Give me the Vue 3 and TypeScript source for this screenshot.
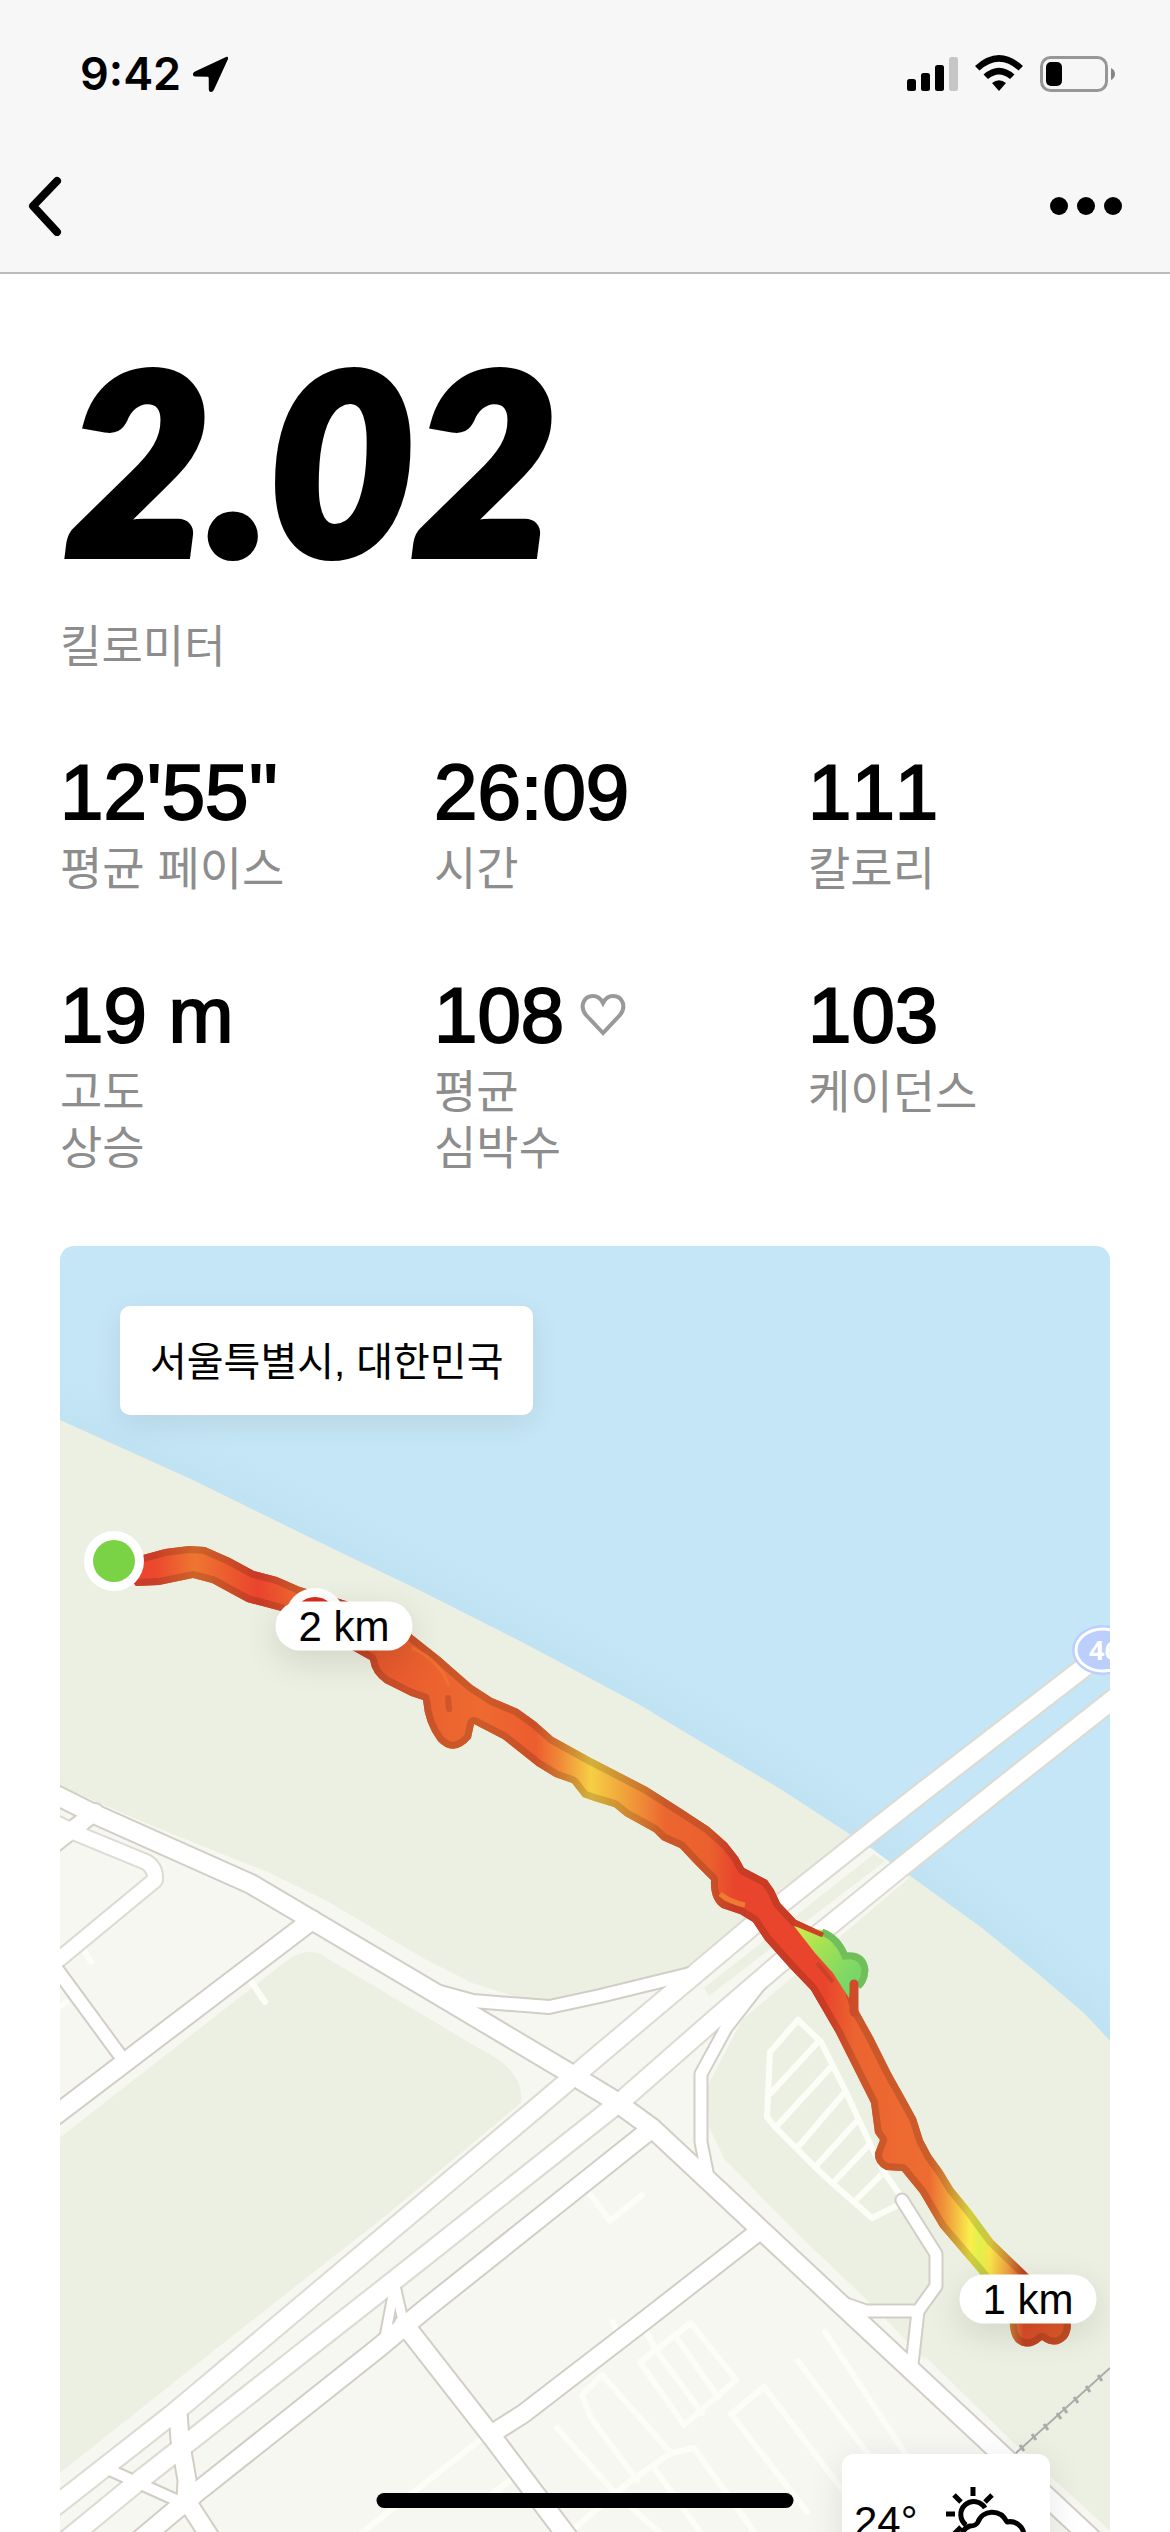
<script setup lang="ts">
interface Metric {
  value: string
  label: string[]
  heart?: boolean
}

interface Pin {
  text: string
  x: number
  y: number
}

const metrics: Metric[] = [
  { value: "12'55''", label: ['평균 페이스'] },
  { value: '26:09', label: ['시간'] },
  { value: '111', label: ['칼로리'] },
  { value: '19 m', label: ['고도', '상승'] },
  { value: '108', label: ['평균', '심박수'], heart: true },
  { value: '103', label: ['케이던스'] },
]

// The map drawing spans 1050 x 1286 units, with its origin at (60, 1246).
const map = { x: 60, y: 1246, width: 1050, height: 1286 }

const pins: Pin[] = [
  { text: '2 km', x: 344, y: 1626 },
  { text: '1 km', x: 1028, y: 2299 },
]

const pinStyle = (pin: Pin) => ({
  left: `${((pin.x - map.x) / map.width) * 100}%`,
  top: `${((pin.y - map.y) / map.height) * 100}%`,
})

const shore =
  'M40 1411 L193 1480 L315 1540 L423 1592 L522 1642 L640 1705 L698 1740 L782 1790 L851 1835 L909 1875 L982 1928 L1036 1972 L1084 2013 L1130 2062'

const roads: { d: string; w: number; minor?: boolean }[] = [
  { d: 'M1130 1632 L925 1790 L860 1841 L782 1903 L752 1926 L600 2054 L534 2110 L187 2402 L170 2416 L40 2518', w: 18 },
  { d: 'M1130 1686 L998 1790 L899 1869 L824 1930 L780 1963 L716 2018 L626 2097 L396 2279 L190 2441 L135 2484 L40 2562', w: 18 },
  { d: 'M40 1787 L92 1813 L251 1884 L430 1990 L566 2071 L612 2099 L652 2128 L1120 2565', w: 18, minor: true },
  { d: 'M40 1855 L95 1812', w: 16, minor: true },
  { d: 'M50 1820 L78 1834 L146 1862 Q156 1868 155 1880 L40 1975', w: 14 },
  { d: 'M50 1960 L119 2054', w: 12, minor: true },
  { d: 'M312 1920 L40 2127', w: 18, minor: true },
  { d: 'M646 2133 L424 2310 L377 2349 L197 2492 L110 2565', w: 18, minor: true },
  { d: 'M394 2290 L384 2342', w: 9, minor: true },
  { d: 'M396 2290 L404 2325', w: 9, minor: true },
  { d: 'M404 2324 L493 2438 L570 2540', w: 18, minor: true },
  { d: 'M493 2433 L523 2414 L640 2324 L758 2232', w: 17, minor: true },
  { d: 'M178 2412 L180 2440 L187 2480 L186 2500 L212 2540', w: 17, minor: true },
  { d: 'M103 2467 L185 2504', w: 10, minor: true },
  { d: 'M440 1992 L473 2001 L549 2007 L600 1996 L690 1974', w: 12, minor: true },
  { d: 'M765 1978 L726 2028 L701 2074 L701 2142 L707 2172', w: 11, minor: true },
  { d: 'M902 2200 L936 2254 L936 2286 L918 2311 L866 2311 L846 2304', w: 11, minor: true },
  { d: 'M918 2311 L912 2365', w: 11, minor: true },
]

const paths: string[] = [
  'M798 2020 L770 2052 L767 2117 L776 2128 L815 2167 L831 2182 L872 2218 L898 2205',
  'M798 2020 L821 2042 L845 2090 L873 2150 L884 2172 L902 2198',
  'M818 2042 L771 2093 M830 2068 L776 2127 M845 2092 L798 2147 M856 2122 L815 2167 M869 2145 L833 2183 M883 2173 L856 2200',
  'M587 2190 L610 2221 L642 2195',
  'M691 2323 L640 2362 L684 2425 L736 2380 Z',
  'M676 2337 L718 2397 M613 2322 L616 2330 M647 2333 L656 2350 L702 2413',
  'M825 2332 L916 2470 M798 2361 L880 2470',
  'M807 2512 L731 2414 L764 2387 L850 2500',
  'M637 2480 L591 2418 L582 2395 L602 2375 L671 2453',
  'M576 2527 L629 2482 L671 2453 L694 2448 L760 2540 M654 2468 L706 2540',
  'M557 2428 L614 2492 L668 2540',
  'M480 2440 L350 2542 M511 2480 L491 2495',
  'M84 1950 L91 1962 M250 1980 L265 2002 M50 2014 L66 2002',
]

const ties: [number, number][] = [
  [1100, 2378], [1088, 2389], [1076, 2400], [1065, 2410],
  [1059, 2416], [1046, 2427], [1034, 2437], [1022, 2448],
]

const route =
  'M116 1560 L143 1555 L165 1549 L189 1546 L205 1547 L230 1558 L254 1571 L277 1577 L300 1587 L346 1601 L411 1634 L440 1657 L472 1685 L492 1698 L518 1709 L536 1722 L553 1737 L591 1758 L620 1773 L647 1787 L680 1808 L709 1827 L727 1843 L738 1857 L744 1868 L767 1880 L774 1890 L780 1903 L796 1920 L822 1932 L840 1960 L849 1982 L858 2010 L873 2037 L891 2073 L905 2098 L916 2118 L923 2140 L931 2155 L942 2170 L953 2188 L971 2210 L993 2240 L1027 2273 L1066 2310 Q1075 2326 1067 2338 Q1056 2350 1042 2340 Q1028 2352 1016 2342 Q1008 2334 1010 2310 L980 2274 L940 2227 L920 2193 L902 2171 L886 2170 Q874 2164 875 2153 L880 2140 L875 2133 L871 2103 L856 2073 L836 2033 L811 1990 L789 1967 L765 1940 L753 1922 L740 1914 L722 1908 Q710 1900 711 1880 L695 1864 L680 1848 L662 1840 L654 1832 L625 1816 L614 1807 L594 1801 L583 1797 L572 1783 L555 1777 L537 1766 L503 1739 L474 1724 L471 1738 Q454 1758 438 1741 Q425 1724 423 1700 L411 1696 L385 1683 Q372 1674 370 1660 L354 1651 L300 1620 L281 1611 L247 1602 L212 1583 L193 1578 L159 1585 L136 1586 Z'

const routeStops: [number, string][] = [
  [114, '#ec442e'], [155, '#ec482e'], [195, '#ee7631'], [258, '#ea432d'],
  [300, '#ee6a30'], [345, '#de452b'], [380, '#e8592e'], [480, '#ee6a30'],
  [535, '#ec5c2f'], [560, '#f08a38'], [591, '#f5cf45'], [635, '#f09438'],
  [665, '#ec6630'], [710, '#ea602e'], [735, '#e9452c'], [825, '#e9452c'],
  [855, '#ec6430'], [930, '#ed6d31'], [946, '#f09a3b'], [970, '#faee4b'],
  [980, '#e2f04c'], [990, '#f8e44b'], [1008, '#f0a040'], [1024, '#dd4d29'],
  [1080, '#e2602b'],
]
</script>

<template>
  <main class="screen">
    <header class="top">
      <div class="status">
        <div class="clock">
          <span>9:42</span>
          <svg class="arrow" viewBox="0 0 36 36" aria-hidden="true">
            <path d="M35 3Q35.500 0 32.500 1.200L2 15.500Q-.5 17 0 19Q.5 20.500 2.500 20.500L14.500 20.700Q15.700 20.700 15.700 22L15.800 33.500Q16 36 18 36Q19.800 36 20.800 34Z" />
          </svg>
        </div>
        <svg class="indicators" viewBox="907 54 209 40" aria-label="신호, Wi-Fi, 배터리">
          <rect x="907" y="79" width="9" height="12" rx="2.500" />
          <rect x="921" y="73" width="9" height="18" rx="2.500" />
          <rect x="935" y="65" width="9" height="26" rx="2.500" />
          <rect x="949" y="57" width="9" height="34" rx="2.500" fill="#c6c6c6" />
          <path d="M975 66Q999 44 1023 66L1018.500 70.500Q999 53 979.500 70.500Z" />
          <path d="M983.500 74.500Q999 61 1014.500 74.500L1010 79Q999 70 988 79Z" />
          <path d="M992 83Q999 77.500 1006 83L999 91Z" />
          <rect x="1041.500" y="57.500" width="65" height="33" rx="9" fill="none" stroke="#979797" stroke-width="3" />
          <rect x="1046" y="62" width="16" height="24" rx="5" />
          <path d="M1111 68Q1115 70 1115 74T1111 80Z" fill="#858585" />
        </svg>
      </div>
      <nav class="nav">
        <button class="icon-btn" type="button" aria-label="뒤로">
          <svg width="36" height="60" viewBox="0 0 36 60"><path d="M30 5L6 30L30 56" fill="none" stroke="#000" stroke-width="8" stroke-linecap="round" stroke-linejoin="round" /></svg>
        </button>
        <button class="icon-btn" type="button" aria-label="더 보기">
          <svg width="74" height="20" viewBox="0 0 74 20"><circle cx="10" cy="10" r="9" /><circle cx="37" cy="10" r="9" /><circle cx="64" cy="10" r="9" /></svg>
        </button>
      </nav>
    </header>

    <section class="content">
      <h1 class="distance">2.02</h1>
      <p class="label unit">킬로미터</p>

      <dl class="metrics">
        <div v-for="m in metrics" :key="m.value" class="metric">
          <dd class="value">
            {{ m.value }}
            <svg v-if="m.heart" class="heart" viewBox="0 0 46 44" aria-hidden="true">
              <path d="M23 40L6 22C-1 13 4 3 13 3C18 3 21 6 23 10C25 6 28 3 33 3C42 3 47 13 40 22Z" />
            </svg>
          </dd>
          <dt class="label"><span v-for="line in m.label" :key="line">{{ line }}</span></dt>
        </div>
      </dl>

      <div class="map">
        <svg class="map-art" viewBox="60 1246 1050 1286" aria-hidden="true">
          <defs>
            <linearGradient id="pace" gradientUnits="userSpaceOnUse" x1="114" y1="0" x2="1080" y2="0">
              <stop v-for="[x, c] in routeStops" :key="x" :offset="(x - 114) / 966" :stop-color="c" />
            </linearGradient>
            <linearGradient id="fast" gradientUnits="userSpaceOnUse" x1="800" y1="1930" x2="855" y2="1972">
              <stop offset="0" stop-color="#c9e84f" />
              <stop offset=".4" stop-color="#a4e153" />
              <stop offset="1" stop-color="#79d768" />
            </linearGradient>
            <clipPath id="route-clip"><path :d="route" /></clipPath>
            <filter id="soft" x="-10%" y="-10%" width="120%" height="120%"><feGaussianBlur stdDeviation="20" /></filter>
          </defs>

          <rect x="60" y="1246" width="1050" height="1286" fill="#c5e6f6" />
          <path :d="shore" fill="none" stroke="#b4dbeb" stroke-width="40" opacity=".4" filter="url(#soft)" />
          <path :d="`${shore} V2560 H40 Z`" fill="#ecf0e2" />
          <path
            d="M40 1777 L155 1827 L270 1873 L327 1901 L423 1958 L472 1983 L514 1996 L549 2004 L682 1971 L849 1836 L874 1850 L909 1878 L742 2020 L708 2085 L709 2127 L725 2160 L804 2240 L869 2302 L1014 2443 L1120 2540 V2560 H40 Z"
            fill="#f6f7f1"
          />
          <path d="M704 1988 L874 1854 L885 1861 L709 1996 Z" fill="#ecf0e2" />
          <path
            d="M40 2153 L285 1962 Q308 1945 325 1957 L499 2060 Q524 2078 521 2103 L384 2217 L231 2337 L40 2489 Z"
            fill="#ecf0e2"
          />
          <path d="M850 2250 L869 2302 L925 2360 L918 2311 Z" fill="#ecf0e2" />

          <g class="paths"><path v-for="d in paths" :key="d" :d="d" /></g>
          <g class="road">
            <path v-for="r in roads" :key="r.d" :d="r.d" :stroke-width="r.w + 4" :stroke="r.minor ? '#d2cec6' : '#dcdad1'" />
            <path v-for="r in roads" :key="r.d" :d="r.d" :stroke-width="r.w" stroke="#fff" />
          </g>

          <path d="M1110 2368 L1016 2453" stroke="#ababab" stroke-width="2" />
          <path v-for="[x, y] in ties" :key="x" :d="`M${x - 2} ${y - 3} l4 6`" stroke="#ababab" stroke-width="3" />

          <ellipse cx="1103" cy="1650" rx="31" ry="25" fill="#bccffc" />
          <ellipse cx="1103" cy="1650" rx="27" ry="21" fill="none" stroke="#fff" stroke-width="3" />
          <text x="1089" y="1660" class="shield">46</text>

          <path :d="route" fill="url(#pace)" />
          <g clip-path="url(#route-clip)" fill="none" stroke-linejoin="round">
            <path :d="route" stroke="url(#pace)" stroke-width="14" />
            <path :d="route" stroke="#000" stroke-width="14" opacity=".14" />
          </g>
          <path d="M794 1926 L822 1930 L836 1937 L847 1954 Q866 1952 868 1970 Q868 1984 858 1986 L851 1986 L849 1998 L833 1973 L815 1953 Z" fill="url(#fast)" />
          <path d="M822 1932 Q838 1938 845 1956 Q863 1954 865 1970 Q864 1982 858 1986" fill="none" stroke="#70bf5a" stroke-width="7" />
          <path d="M794 1923 L823 1935" stroke="#cc4026" stroke-width="5" />
          <path d="M854 1984 L854 2012" stroke="#cc4d27" stroke-width="9" stroke-linecap="round" />
          <path d="M817 1963 L833 1982" stroke="#cb4327" stroke-width="4" />
          <path d="M720 1894 Q730 1902 745 1905" fill="none" stroke="#ee7b33" stroke-width="5" />
          <path d="M412 1648 Q440 1660 449 1686" fill="none" stroke="#f07a34" stroke-width="3" opacity=".6" />
          <path d="M448 1698 L449 1709" stroke="#cf5629" stroke-width="6" stroke-linecap="round" />

          <circle cx="114" cy="1561" r="30" fill="#fff" />
          <circle cx="114" cy="1561" r="21" fill="#7ad345" />
          <circle cx="315" cy="1618" r="30" fill="#fff" />
          <circle cx="315" cy="1618" r="21" fill="#d92b20" />
        </svg>

        <p class="place">서울특별시, 대한민국</p>
        <span v-for="pin in pins" :key="pin.text" class="pin" :style="pinStyle(pin)">{{ pin.text }}</span>

        <div class="weather">
          <span>24°</span>
          <svg width="88" height="76" viewBox="0 0 88 76" fill="none" stroke="#000" stroke-width="5" aria-hidden="true">
            <path d="M29 3V12M2 30H11M10 11L17 18M48 11L41 18M10 50L17 43" />
            <path d="M22 41A13 13 0 1 1 41 24" />
            <path d="M24 64A12 12 0 0 1 26 42C31 42 33 40 34 38C38 26 56 24 63 38C72 36 79 43 80 50C82 58 76 64 69 64Z" stroke-linejoin="round" />
          </svg>
        </div>
      </div>
    </section>

    <div class="home-bar"></div>
  </main>
</template>

<style>
body {
  margin: 0;
  background: #fff;
}
</style>

<style scoped>
.screen {
  color: #000;
  font-family: 'Liberation Sans', 'Noto Sans CJK KR', sans-serif;
}

.top {
  padding-bottom: 8px;
  background: #f7f7f7;
  border-bottom: 2px solid #bcbcbc;
}

.status {
  display: flex;
  align-items: center;
  justify-content: space-between;
  height: 148px;
  padding: 0 54px 0 80px;
}

.clock {
  display: flex;
  align-items: center;
  gap: 12px;
  font: 600 45px/56px Inter, sans-serif;
}

.arrow {
  width: 36px;
  height: 36px;
}

.indicators {
  width: 209px;
  height: 40px;
}

.nav {
  display: flex;
  align-items: center;
  justify-content: space-between;
  height: 116px;
  padding: 0 47px 0 27px;
}

.icon-btn {
  display: flex;
  padding: 0;
  border: 0;
  background: none;
}

.content {
  padding: 58px 60px 0;
}

.distance {
  margin: 0;
  padding-left: 6px;
  font: italic 900 248px/252px Lato, sans-serif;
  -webkit-text-stroke: 10px #000;
}

.label {
  margin: 0;
  padding-top: 3px;
  color: #8d8d8d;
  font-size: 46px;
  line-height: 56px;
}

.label span {
  display: block;
}

.unit {
  margin-top: 33px;
  font-size: 45px;
}

.metrics {
  display: grid;
  grid-template-columns: repeat(3, 1fr);
  gap: 72px;
  margin: 70px 0;
}

.metric {
  display: flex;
  flex-direction: column;
}

.value {
  display: flex;
  align-items: center;
  gap: 16px;
  margin: 0;
  font-size: 78px;
  font-kerning: none;
  line-height: 92px;
  white-space: nowrap;
  -webkit-text-stroke: 2px #000;
}

.heart {
  width: 46px;
  height: 44px;
  fill: none;
  stroke: #999;
  stroke-width: 4px;
}

.map {
  position: relative;
  overflow: hidden;
  border-radius: 14px 14px 0 0;
}

.map-art {
  display: block;
  width: 100%;
}

.paths path {
  fill: none;
  stroke: #fdfdf8;
  stroke-width: 6px;
  stroke-linecap: round;
  stroke-linejoin: round;
}

.road path {
  fill: none;
  stroke-linecap: round;
  stroke-linejoin: round;
}

.shield {
  fill: #fff;
  font: 700 27px 'Open Sans', sans-serif;
}

.place {
  position: absolute;
  top: 60px;
  left: 60px;
  margin: 0;
  padding: 28px 30px 24px;
  border-radius: 10px;
  background: #fff;
  box-shadow: 0 8px 30px rgba(0, 0, 0, 0.08);
  font-size: 40px;
  line-height: 57px;
  white-space: nowrap;
}

.pin {
  position: absolute;
  padding: 0 23px;
  border-radius: 25px;
  background: #fff;
  box-shadow: 0 10px 36px rgba(0, 0, 0, 0.12);
  font-size: 42px;
  line-height: 49px;
  white-space: nowrap;
  transform: translate(-50%, -50%);
}

.weather {
  position: absolute;
  right: 60px;
  bottom: -58px;
  display: flex;
  align-items: center;
  gap: 26px;
  box-sizing: border-box;
  width: 208px;
  height: 136px;
  padding: 0 12px;
  border-radius: 12px;
  background: #fff;
  box-shadow: 0 8px 36px rgba(0, 0, 0, 0.1);
  font-size: 42px;
}

.weather svg {
  flex: none;
}

.home-bar {
  position: fixed;
  bottom: 24px;
  left: 50%;
  width: 417px;
  height: 15px;
  border-radius: 8px;
  background: #000;
  transform: translateX(-50%);
}
</style>
